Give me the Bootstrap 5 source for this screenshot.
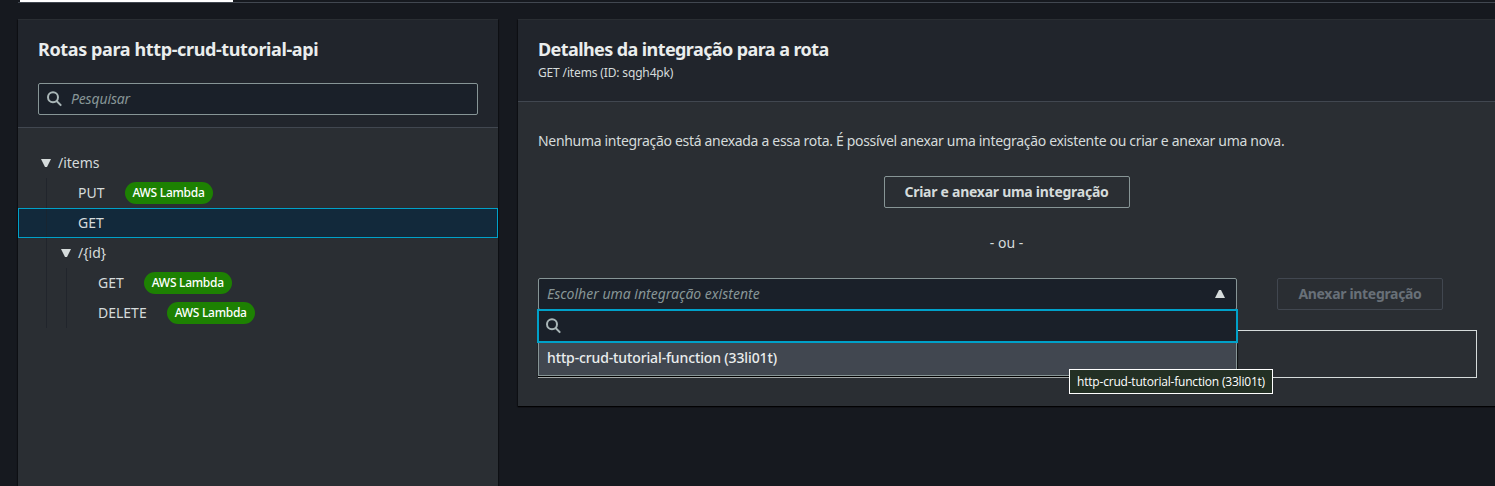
<!DOCTYPE html>
<html lang="pt-BR">
<head>
<meta charset="utf-8">
<meta name="viewport" content="width=device-width, initial-scale=1">
<title>Integrações</title>
<link href="https://cdn.jsdelivr.net/npm/bootstrap@5.3.0/dist/css/bootstrap.min.css" rel="stylesheet">
<style>
  body { background: #16191f; color: #d5dbdb; font-family: "Noto Sans", sans-serif; font-size: 14px; line-height: 22px; height: 486px; overflow: hidden; }
  .tabline { height: 3px; margin-left: 18px; border-bottom: 1px solid #414750; padding-left: 2px; }
  .tabline .active-tab { width: 213px; height: 2px; background: #fff; }
  .workspace { gap: 20px; padding-left: 18px; margin-top: 16px; width: 1497px; }
  .panel { background: #2a2e33; box-shadow: 0 1px 1px 0 rgba(0,0,0,.8), 1px 1px 1px 0 rgba(0,0,0,.25), -1px 1px 1px 0 rgba(0,0,0,.25); border-top: 1px solid #2a2e33; }
  .routes { width: 480px; height: 480px; }
  .details { width: 979px; height: 387px; }
  .panel-head { background: #21252c; border-bottom: 1px solid #414750; padding: 18px 20px 0; }
  .routes .panel-head { height: 108px; }
  .details .panel-head { height: 82px; }
  h2 { font-size: 18px; line-height: 22px; font-weight: 700; color: #eaeded; margin: 0; white-space: nowrap; letter-spacing: -.38px; }
  .details h2 { letter-spacing: -.59px; }
  .sub { font-size: 12px; letter-spacing: -.15px; margin-top: 2px; }
  .field { height: 32px; background: #1a2029; border: 1px solid #879596; border-radius: 2px; padding: 0 8px; color: #879596; font-style: italic; }
  .search { margin-top: 23px; letter-spacing: -.15px; }
  .tree { padding-top: 20px; }
  .tree-row { height: 30px; gap: 20px; }
  .lvl-0 { padding-left: 23px; gap: 7px; }
  .branch > .tree-row { padding-left: 31px; }
  .branch { margin-left: 28px; border-left: 1px solid #21252c; }
  .branch .branch { margin-left: 19px; }
  .branch > .folder { padding-left: 14px; gap: 7px; }
  .pill { background: #1d8102; color: #fff; border-radius: 11px; height: 22px; width: 88px; font-size: 12px; font-weight: 500; text-align: center; letter-spacing: -.28px; }
  .branch > .chosen { background: #12293b; border: 1px solid #00a1c9; margin-left: -29px; padding-left: 59px; position: relative; }
  .chosen::before { content: ""; position: absolute; left: 27px; top: 0; bottom: 0; width: 1px; background: #182531; }
  .details-body { padding: 28px 20px 0; }
  .intro { letter-spacing: -.316px; white-space: nowrap; }
  .centered { padding-right: 2px; }
  .act { height: 32px; border: 1px solid #879596; border-radius: 2px; font-weight: 700; color: #d5dbdb; padding: 0; line-height: 30px; font-size: 14px; }
  .act-new { width: 246px; letter-spacing: -.265px; }
  .act-attach { width: 166px; letter-spacing: -.32px; border-color: #414750; color: #687078; }
  .gap-block { margin-top: 24px; }
  .picker-row { gap: 40px; }
  .picker { width: 699px; }
  .caret { margin-right: 3px; }
  .menu { left: -1px; right: -1px; top: 31px; z-index: 2; }
  .menu-search { height: 34px; border: 2px solid #00a1c9; background: #1a2029; padding-left: 7px; }
  .menu-opt { height: 33px; margin: 0 1px; background: #414750; border: 1px solid #879596; border-top: 0; padding: 0 0 2px 8px; font-weight: 500; color: #eaeded; letter-spacing: -.13px; box-shadow: 0 1px 1px #000, 1px 1px 1px rgba(0,0,0,.5); }
  .result { height: 48px; margin-top: 20px; border: 1px solid #d5dbdb; }
  .tip { left: 531px; top: 91px; width: 204px; height: 25px; background: #233024; border: 1px solid #fff; color: #fff; font: 12px/23px "Open Sans", sans-serif; letter-spacing: -.2px; z-index: 3; text-align: center; white-space: nowrap; }
</style>
</head>
<body>
<div class="tabline"><div class="active-tab"></div></div>
<main class="workspace d-flex align-items-start">
  <section class="panel routes flex-shrink-0">
    <div class="panel-head">
      <h2>Rotas para http-crud-tutorial-api</h2>
      <div class="field search d-flex align-items-center">
        <svg class="me-2" width="16" height="16" viewBox="0 0 16 16" fill="none" stroke="#aab7b8" stroke-width="2"><circle cx="6" cy="6.3" r="5"/><path d="M9.6 10l4.6 4.6"/></svg>
        <span>Pesquisar</span>
      </div>
    </div>
    <div class="tree">
      <div class="tree-row lvl-0 d-flex align-items-center"><svg width="10" height="8" fill="#d5dbdb"><path d="M0 0h10L6 8H4z"/></svg><span>/items</span></div>
      <div class="branch">
        <div class="tree-row d-flex align-items-center"><span>PUT</span><span class="pill">AWS Lambda</span></div>
        <div class="tree-row chosen d-flex align-items-center"><span>GET</span></div>
        <div class="tree-row folder d-flex align-items-center"><svg width="10" height="8" fill="#d5dbdb"><path d="M0 0h10L6 8H4z"/></svg><span>/{id}</span></div>
        <div class="branch">
          <div class="tree-row d-flex align-items-center"><span>GET</span><span class="pill">AWS Lambda</span></div>
          <div class="tree-row d-flex align-items-center"><span>DELETE</span><span class="pill">AWS Lambda</span></div>
        </div>
      </div>
    </div>
  </section>
  <section class="panel details flex-shrink-0">
    <div class="panel-head">
      <h2>Detalhes da integração para a rota</h2>
      <div class="sub">GET /items (ID: sqgh4pk)</div>
    </div>
    <div class="details-body">
      <div class="intro">Nenhuma integração está anexada a essa rota. É possível anexar uma integração existente ou criar e anexar uma nova.</div>
      <div class="gap-block centered d-flex justify-content-center"><button class="btn act act-new">Criar e anexar uma integração</button></div>
      <div class="gap-block centered text-center">- ou -</div>
      <div class="gap-block picker-row d-flex">
        <div class="picker position-relative">
          <div class="field d-flex align-items-center justify-content-between">
            <span>Escolher uma integração existente</span>
            <svg class="caret" width="10" height="8" fill="#d5dbdb"><path d="M0 8h10L6 0H4z"/></svg>
          </div>
          <div class="menu position-absolute">
            <div class="menu-search d-flex align-items-center"><svg width="16" height="16" viewBox="0 0 16 16" fill="none" stroke="#aab7b8" stroke-width="2"><circle cx="6" cy="6.3" r="5"/><path d="M9.6 10l4.6 4.6"/></svg></div>
            <div class="menu-opt d-flex align-items-center">http-crud-tutorial-function (33li01t)</div>
          </div>
          <div class="tip position-absolute">http-crud-tutorial-function (33li01t)</div>
        </div>
        <button class="btn act act-attach">Anexar integração</button>
      </div>
      <div class="result"></div>
    </div>
  </section>
</main>
<script src="https://cdn.jsdelivr.net/npm/bootstrap@5.3.0/dist/js/bootstrap.bundle.min.js"></script>
</body>
</html>
